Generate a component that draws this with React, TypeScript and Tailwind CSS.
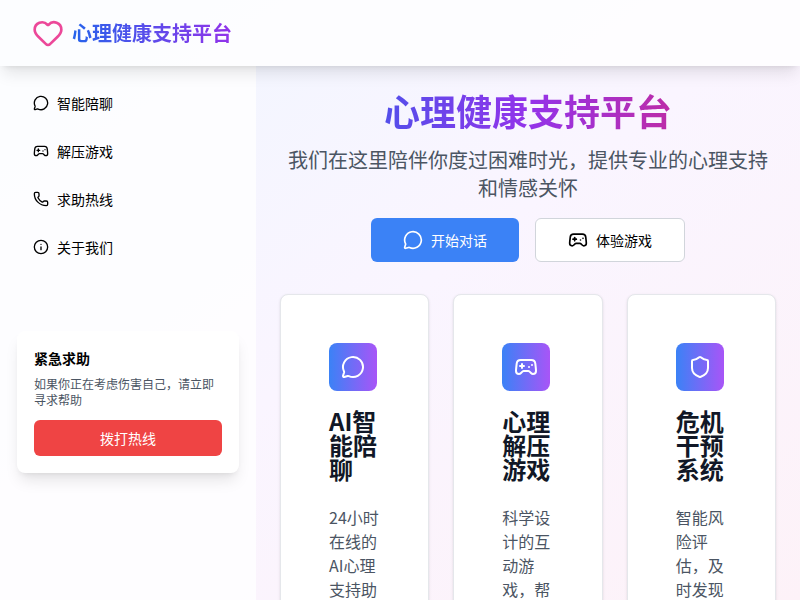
import { Gamepad2, Heart, Info, MessageCircle, Phone, Shield } from 'lucide-react';

const font = '[font-family:"Noto_Sans_CJK_SC",sans-serif]';

const navItems = [
  { icon: MessageCircle, label: '智能陪聊' },
  { icon: Gamepad2, label: '解压游戏' },
  { icon: Phone, label: '求助热线' },
  { icon: Info, label: '关于我们' },
];

const features = [
  { icon: MessageCircle, title: 'AI智能陪聊', text: '24小时在线的AI心理支持助手，随时倾听你的心声' },
  { icon: Gamepad2, title: '心理解压游戏', text: '科学设计的互动游戏，帮助你放松身心缓解压力' },
  { icon: Shield, title: '危机干预系统', text: '智能风险评估，及时发现并提供专业帮助' },
];

export default function App() {
  return (
    <div className={`${font} h-screen overflow-hidden bg-linear-to-br/srgb from-[#eff6ff] via-[#faf5ff] to-[#fdf2f8] text-black`}>
      <header className="relative z-10 flex h-[66px] items-center gap-2 bg-white/80 px-8 shadow-lg">
        <Heart className="h-8 w-8 text-[#ec4899]" />
        <span className="bg-linear-to-r/srgb from-[#2563eb] to-[#9333ea] bg-clip-text text-xl font-bold text-transparent">
          心理健康支持平台
        </span>
      </header>

      <div className="flex h-[534px]">
        <aside className="w-64 shrink-0 bg-white/80 px-4 pt-[13px]">
          <nav className="flex flex-col">
            {navItems.map((item) => (
              <div key={item.label} className="flex h-12 items-center gap-2 px-[17px] text-sm">
                <item.icon className="h-4 w-4" />
                <span>{item.label}</span>
              </div>
            ))}
          </nav>

          <div className="mx-px mt-[60px] rounded-lg bg-white px-[17px] pt-[17px] pb-[17px] shadow-lg">
            <h3 className="mb-2 text-sm font-bold">紧急求助</h3>
            <p className="mb-3 text-xs leading-4 text-[#4b5563]">如果你正在考虑伤害自己，请立即寻求帮助</p>
            <button className="h-9 w-full rounded-md bg-[#ef4444] text-sm text-white">拨打热线</button>
          </div>
        </aside>

        <main className="min-w-0 flex-1 p-6 text-center">
          <h1 className="bg-linear-to-r/srgb from-[#2563eb] via-[#9333ea] to-[#db2777] bg-clip-text text-4xl font-bold text-transparent">
            心理健康支持平台
          </h1>
          <p className="mt-4 text-xl text-[#4b5563]">我们在这里陪伴你度过困难时光，提供专业的心理支持和情感关怀</p>
          <div className="mt-4 flex justify-center gap-4">
            <button className="flex h-11 items-center gap-2 rounded-md bg-[#3b82f6] px-8 text-sm text-white">
              <MessageCircle className="h-5 w-5" />
              开始对话
            </button>
            <button className="flex h-11 items-center gap-2 rounded-md border border-[#d1d5db] bg-white px-8 text-sm">
              <Gamepad2 className="h-5 w-5" />
              体验游戏
            </button>
          </div>

          <div className="mt-8 grid grid-cols-3 gap-6 text-left">
            {features.map((f) => (
              <div key={f.title} className="rounded-lg border border-[#e5e7eb] bg-white p-12 shadow-sm">
                <div className="flex h-12 w-12 items-center justify-center rounded-lg bg-linear-to-r/srgb from-[#3b82f6] to-[#a855f7]">
                  <f.icon className="h-6 w-6 text-white" />
                </div>
                <h3 className="mt-[18px] text-2xl leading-6 font-bold text-[#111827]">{f.title}</h3>
                <p className="mt-6 text-base text-[#4b5563]">{f.text}</p>
              </div>
            ))}
          </div>
        </main>
      </div>
    </div>
  );
}
